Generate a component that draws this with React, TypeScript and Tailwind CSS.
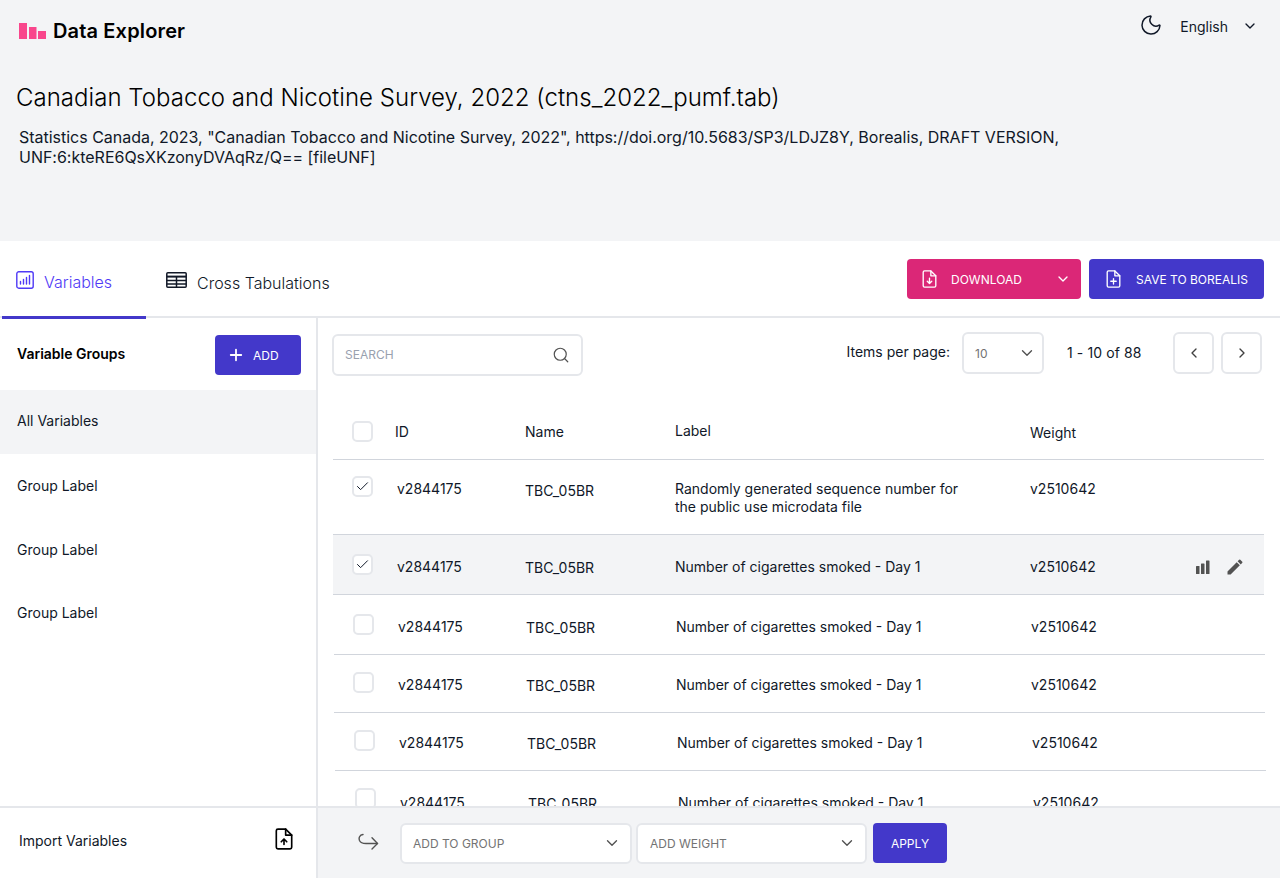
import { ChevronDown, ChevronLeft, ChevronRight, Moon, Plus, Search, Check } from "lucide-react";

const font = { fontFamily: "Inter, 'Liberation Sans', sans-serif" };

function Logo() {
  return (
    <svg width="27" height="16" viewBox="0 0 27 16" className="block">
      <rect x="0" y="0" width="8" height="16" fill="#f9468c" />
      <rect x="10" y="4" width="7.5" height="12" fill="#f9468c" />
      <rect x="19" y="8" width="8" height="8" fill="#f9468c" />
    </svg>
  );
}

function FileIcon({ kind, className }: { kind: "down" | "plus" | "up"; className?: string }) {
  return (
    <svg viewBox="0 0 16 20" fill="none" stroke="currentColor" strokeWidth="1.5" strokeLinejoin="round" strokeLinecap="round" className={className}>
      <path d="M2.5 1H9.5L15 6.5V17.5A1.5 1.5 0 0 1 13.5 19H2.5A1.5 1.5 0 0 1 1 17.5V2.5A1.5 1.5 0 0 1 2.5 1Z" />
      <path d="M9.5 1V6.5H15" />
      {kind === "down" && <path d="M8 9V15M5.5 12.5L8 15L10.5 12.5" />}
      {kind === "plus" && <path d="M8 9.5V15.5M5 12.5H11" />}
      {kind === "up" && <path d="M8 15V10M5.5 12.5L8 10L10.5 12.5" />}
    </svg>
  );
}

function ChartTabIcon() {
  return (
    <svg width="18" height="18" viewBox="0 0 18 18" fill="none" stroke="currentColor" strokeWidth="1.4" strokeLinecap="round">
      <rect x="0.8" y="0.8" width="16.4" height="16.4" rx="2" />
      <path d="M4.5 13V10.5M7.5 13V8.5M10.5 13V6.5M13.5 13V4.5" />
    </svg>
  );
}

function TableIcon() {
  return (
    <svg width="21" height="16" viewBox="0 0 21 16" fill="none" stroke="#111827" strokeWidth="1.5">
      <rect x="0.8" y="0.8" width="19.4" height="14.4" rx="1" />
      <path d="M0.8 4.6H20.2" strokeWidth="2" />
      <path d="M0.8 8.4H20.2M0.8 12H20.2M10.5 4.6V15.2" />
    </svg>
  );
}

function SendIcon() {
  return (
    <svg width="21" height="20" viewBox="0 0 21 20" fill="none" stroke="#525252" strokeWidth="1.4" strokeLinecap="round" strokeLinejoin="round" className="-mt-[3px]">
      <path d="M5 2.5C1.5 3 0.5 6 1.5 8.5C2.5 10.8 5 11.5 8 11.5H19.5" />
      <path d="M14 5.8L19.5 11.5L14 17" />
    </svg>
  );
}

function Checkbox({ checked }: { checked?: boolean }) {
  return (
    <div className="flex h-[21px] w-[21px] shrink-0 items-center justify-center rounded-[5px] border-2 border-gray-200 bg-white">
      {checked && <Check className="h-[15px] w-[15px] text-gray-900" strokeWidth={1.6} />}
    </div>
  );
}

function SelectBox({ label, className }: { label: string; className: string }) {
  return (
    <div className={`flex items-center justify-between rounded-md border-2 border-gray-200 bg-white text-xs text-neutral-500 ${className}`}>
      <span className="pt-[1px]">{label}</span>
      <ChevronDown className="h-[18px] w-[18px] text-neutral-600" strokeWidth={1.8} />
    </div>
  );
}

const rows = [
  { shift: "ml-0", height: "h-[75px]", top: "pt-[16px]", text: "mt-[3px]", name: "pt-[2px]", label: "Randomly generated sequence number for the public use microdata file", checked: true },
  { shift: "ml-0 bg-gray-100", height: "h-[60px]", top: "pt-[19px]", text: "mt-[3px]", name: "pt-[1px]", label: "Number of cigarettes smoked - Day 1", checked: true, actions: true },
  { shift: "ml-[1px]", height: "h-[60px]", top: "pt-[19px]", text: "mt-[3px]", name: "pt-[1px]", label: "Number of cigarettes smoked - Day 1" },
  { shift: "ml-[1px]", height: "h-[58px]", top: "pt-[17px]", text: "mt-[3px]", name: "pt-[1px]", label: "Number of cigarettes smoked - Day 1" },
  { shift: "ml-[2px]", height: "h-[58px]", top: "pt-[17px]", text: "mt-[3px]", name: "pt-[1px]", label: "Number of cigarettes smoked - Day 1" },
  { shift: "ml-[3px]", height: "h-[58px]", top: "pt-[17px]", text: "mt-[5px]", name: "pt-[1px]", label: "Number of cigarettes smoked - Day 1" },
];

export default function App() {
  return (
    <div style={font} className="flex h-[878px] w-[1280px] flex-col overflow-hidden bg-white text-sm text-gray-900">
      {/* Page header */}
      <header className="h-[241px] shrink-0 bg-gray-100">
        <div className="flex items-start justify-between pl-[19px] pr-[22px] pt-[19px]">
          <div className="flex items-center gap-[7px]">
            <Logo />
            <span className="text-xl leading-[24px] font-semibold tracking-[0.15px] text-black">Data Explorer</span>
          </div>
          <div className="-mt-[3px] flex items-center">
            <Moon className="-mt-[4px] h-[24px] w-[24px] text-gray-900" strokeWidth={1.5} />
            <span className="ml-[17px] leading-[22px]">English</span>
            <ChevronDown className="ml-[14px] h-[16px] w-[16px] -translate-y-[1px] text-gray-900" strokeWidth={2} />
          </div>
        </div>
        <h1 className="mt-[39px] pl-[16px] text-2xl leading-[32px] font-light tracking-[0.03px] text-black">
          Canadian Tobacco and Nicotine Survey, 2022 (ctns_2022_pumf.tab)
        </h1>
        <p className="mt-[13px] w-[1070px] pl-[19px] text-base leading-[20px] tracking-[-0.015px] text-gray-900">
          Statistics Canada, 2023, "Canadian Tobacco and Nicotine Survey, 2022", https://doi.org/10.5683/SP3/LDJZ8Y, Borealis, DRAFT VERSION, UNF:6:kteRE6QsXKzonyDVAqRz/Q== [fileUNF]
        </p>
      </header>

      {/* Tabs and actions */}
      <div className="flex h-[77px] shrink-0 items-start justify-between border-b-2 border-gray-200 pr-[16px]">
        <div className="flex h-[78px] pl-[2px]">
          <div className="flex h-[78px] w-[144px] items-start gap-[10px] border-b-[3px] border-[#4338ca] pl-[14px] pt-[30px] text-indigo-600">
            <ChartTabIcon />
            <span className="text-base leading-[22px] font-light">Variables</span>
          </div>
          <div className="flex items-start gap-[10px] pl-[20px] pt-[31px]">
            <TableIcon />
            <span className="text-base leading-[22px] font-light text-gray-900">Cross Tabulations</span>
          </div>
        </div>
        <div className="mt-[18px] flex gap-[8px] text-xs text-white">
          <div className="flex h-[40px] w-[174px] items-center rounded bg-[#db2777] pl-[15px] pr-[10px]">
            <FileIcon kind="down" className="h-[18px] w-[15px]" />
            <span className="ml-[14px] flex-1 pt-[2px]">DOWNLOAD</span>
            <ChevronDown className="h-[16px] w-[16px]" strokeWidth={2} />
          </div>
          <div className="flex h-[40px] w-[175px] items-center rounded bg-[#4338ca] pl-[17px]">
            <FileIcon kind="plus" className="h-[18px] w-[15px]" />
            <span className="ml-[15px] pt-[2px]">SAVE TO BOREALIS</span>
          </div>
        </div>
      </div>

      {/* Body */}
      <div className="flex min-h-0 flex-1">
        <aside className="flex w-[318px] shrink-0 flex-col border-r-2 border-gray-200">
          <div className="flex h-[72px] shrink-0 items-start justify-between pl-[17px] pr-[15px] pt-[17px]">
            <span className="mt-[9px] font-semibold text-black">Variable Groups</span>
            <div className="flex h-[40px] w-[86px] items-center rounded bg-[#4338ca] pl-[12px] text-xs text-white">
              <Plus className="h-[18px] w-[18px]" strokeWidth={2.4} />
              <span className="ml-[8px] pt-[1px]">ADD</span>
            </div>
          </div>
          <div className="flex h-[64px] shrink-0 items-center bg-gray-100 pb-[2px] pl-[17px]">All Variables</div>
          <div className="flex h-[64px] shrink-0 items-center pl-[17px]">Group Label</div>
          <div className="flex h-[64px] shrink-0 items-center pl-[17px]">Group Label</div>
          <div className="flex h-[62px] shrink-0 items-center pl-[17px]">Group Label</div>
        </aside>

        <main className="min-w-0 flex-1 overflow-hidden">
          {/* Search and pagination */}
          <div className="flex h-[72px] items-start justify-between pl-[14px] pr-[18px] pt-[14px]">
            <div className="mt-[2px] flex h-[42px] w-[251px] items-center justify-between rounded-md border-2 border-gray-200 pl-[11px] pr-[11px] text-xs text-gray-400">
              <span>SEARCH</span>
              <Search className="h-[18px] w-[18px] text-neutral-600" strokeWidth={1.6} />
            </div>
            <div className="flex items-center">
              <span className="-mt-[3px]">Items per page:</span>
              <SelectBox label="10" className="ml-[12px] h-[42px] w-[82px] pl-[11px] pr-[6px]" />
              <span className="ml-[23px] w-[106px] tracking-[0.1px]">1 - 10 of 88</span>
              <div className="flex h-[42px] w-[41px] items-center justify-center rounded-md border-2 border-gray-200">
                <ChevronLeft className="h-[16px] w-[16px] text-neutral-700" strokeWidth={2} />
              </div>
              <div className="ml-[7px] flex h-[42px] w-[41px] items-center justify-center rounded-md border-2 border-gray-200">
                <ChevronRight className="h-[16px] w-[16px] text-neutral-700" strokeWidth={2} />
              </div>
            </div>
          </div>

          {/* Variables table */}
          <div className="pl-[15px]">
            <div className="flex h-[70px] w-[931px] items-start border-b border-gray-300 pt-[31px]">
              <div className="w-[62px] pl-[19px]"><Checkbox /></div>
              <span className="w-[130px] pt-[1px]">ID</span>
              <span className="w-[150px] pt-[1px]">Name</span>
              <span className="w-[355px]">Label</span>
              <span className="pt-[2px]">Weight</span>
            </div>
            {rows.map((row, i) => (
              <div key={i} className={`flex w-[931px] items-start border-b border-gray-300 ${row.height} ${row.top} ${row.shift}`}>
                <div className="w-[64px] pl-[19px]"><Checkbox checked={row.checked} /></div>
                <span className={`w-[128px] ${row.text}`}>v2844175</span>
                <span className={`w-[150px] ${row.text} ${row.name}`}>TBC_05BR</span>
                <span className={`w-[355px] pr-[60px] pt-[1px] leading-[18px] ${row.text}`}>{row.label}</span>
                <span className={row.text}>v2510642</span>
                {row.actions && (
                  <div className={`ml-auto flex items-center gap-[13px] pr-[19px] ${row.text}`}>
                    <svg width="18" height="18" viewBox="0 0 18 18" fill="#525252">
                      <rect x="2" y="8" width="3.5" height="8" rx="0.5" />
                      <rect x="7" y="5.5" width="3.5" height="10.5" rx="0.5" />
                      <rect x="12" y="2.5" width="3.5" height="13.5" rx="0.5" />
                    </svg>
                    <svg width="20" height="20" viewBox="0 0 24 24" fill="#525252">
                      <path d="M3 17.25V21h3.75L17.81 9.94l-3.75-3.75L3 17.25zM20.71 7.04a1 1 0 0 0 0-1.41l-2.34-2.34a1 1 0 0 0-1.41 0l-1.83 1.83 3.75 3.75 1.83-1.83z" />
                    </svg>
                  </div>
                )}
              </div>
            ))}
          </div>
        </main>
      </div>

      {/* Footer */}
      <footer className="z-10 flex h-[72px] shrink-0 border-t-2 border-gray-200 bg-white">
        <div className="flex w-[318px] shrink-0 items-center justify-between border-r-2 border-gray-200 pl-[19px] pr-[23px]">
          <span className="-mt-[5px]">Import Variables</span>
          <FileIcon kind="up" className="mb-[8px] h-[22px] w-[18px] text-black" />
        </div>
        <div className="flex flex-1 items-center bg-gray-100 pl-[40px]">
          <SendIcon />
          <SelectBox label="ADD TO GROUP" className="ml-[21px] h-[41px] w-[232px] pl-[11px] pr-[9px]" />
          <SelectBox label="ADD WEIGHT" className="ml-[4px] h-[41px] w-[231px] pl-[12px] pr-[9px]" />
          <div className="ml-[6px] flex h-[40px] w-[74px] items-center justify-center rounded bg-[#4338ca] pt-[1px] text-xs text-white">APPLY</div>
        </div>
      </footer>
    </div>
  );
}
